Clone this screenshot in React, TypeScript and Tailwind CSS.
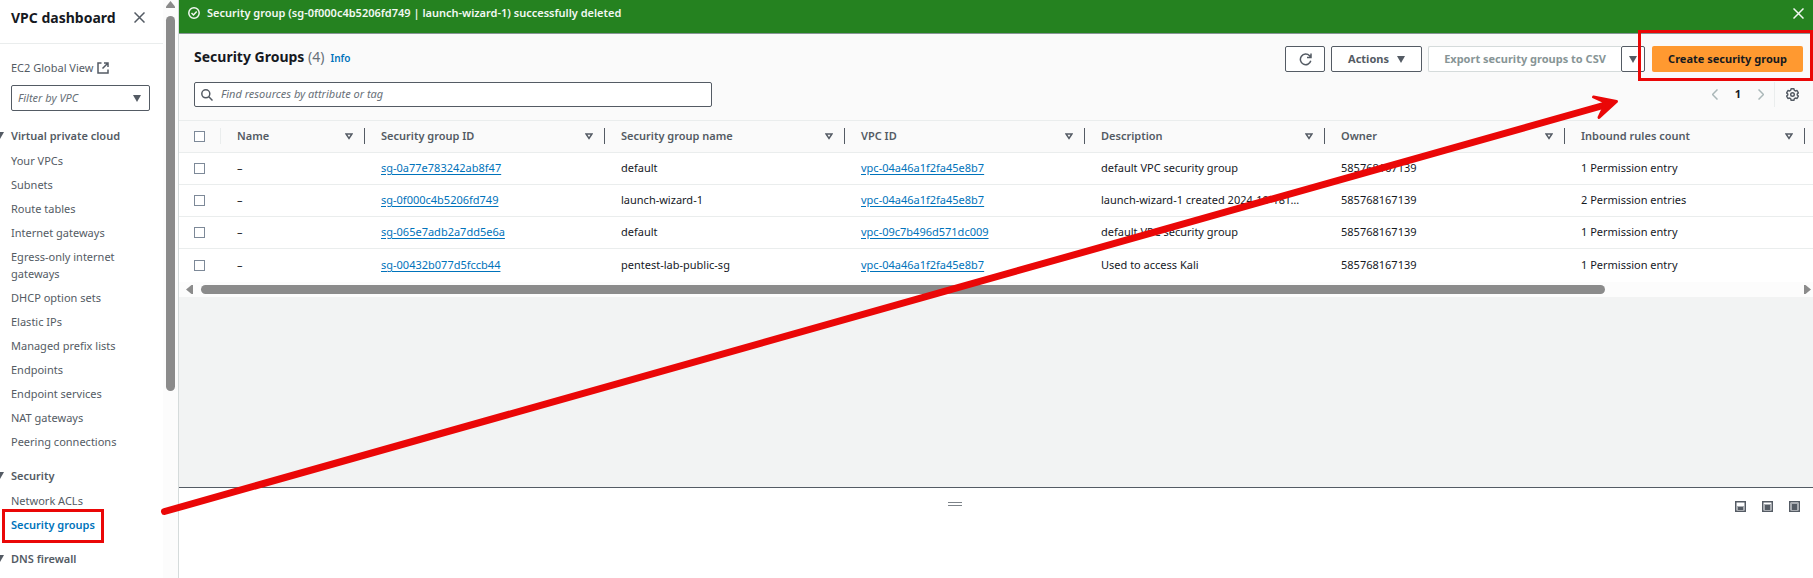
import React from 'react';

const links = [
  'Your VPCs',
  'Subnets',
  'Route tables',
  'Internet gateways',
  'Egress-only internet gateways',
  'DHCP option sets',
  'Elastic IPs',
  'Managed prefix lists',
  'Endpoints',
  'Endpoint services',
  'NAT gateways',
  'Peering connections',
];

const columns = [
  'Name',
  'Security group ID',
  'Security group name',
  'VPC ID',
  'Description',
  'Owner',
  'Inbound rules count',
];

const rows = [
  { id: 'sg-0a77e783242ab8f47', name: 'default', vpc: 'vpc-04a46a1f2fa45e8b7', description: 'default VPC security group', rules: '1 Permission entry' },
  { id: 'sg-0f000c4b5206fd749', name: 'launch-wizard-1', vpc: 'vpc-04a46a1f2fa45e8b7', description: 'launch-wizard-1 created 2024-10-18T…', rules: '2 Permission entries' },
  { id: 'sg-065e7adb2a7dd5e6a', name: 'default', vpc: 'vpc-09c7b496d571dc009', description: 'default VPC security group', rules: '1 Permission entry' },
  { id: 'sg-00432b077d5fccb44', name: 'pentest-lab-public-sg', vpc: 'vpc-04a46a1f2fa45e8b7', description: 'Used to access Kali', rules: '1 Permission entry' },
];

function Caret() {
  return (
    <svg width="8" height="7" viewBox="0 0 8 7" fill="currentColor" className="shrink-0">
      <path d="M0 0h8L4 7z" />
    </svg>
  );
}

function Cross() {
  return (
    <svg width="11" height="11" viewBox="0 0 11 11" fill="none" stroke="currentColor" strokeWidth="1.5">
      <path d="M.5.5l10 10M10.5.5l-10 10" />
    </svg>
  );
}

function Chevron({ flip = false }: { flip?: boolean }) {
  return (
    <svg width="6" height="11" viewBox="0 0 6 11" fill="none" stroke="currentColor" strokeWidth="1.5">
      <path d={flip ? 'M.5.5l5 5-5 5' : 'M5.5.5l-5 5 5 5'} />
    </svg>
  );
}

function PanelIcon({ top }: { top: number }) {
  return (
    <svg width="11" height="11" viewBox="0 0 11 11">
      <rect x=".75" y=".75" width="9.5" height="9.5" fill="#fff" stroke="#545b64" strokeWidth="1.5" />
      <rect x="2" y={top - 1} width="7" height={10 - top} fill="#a9adb2" />
      <rect x="3" y={top} width="5" height={9 - top} fill="#545b64" />
    </svg>
  );
}

function Tick({ label }: { label: string }) {
  return (
    <input
      type="checkbox"
      aria-label={label}
      className="block size-[11px] appearance-none border border-[#7d8998] bg-white"
    />
  );
}

function SectionTitle({ children }: { children: React.ReactNode }) {
  return (
    <h2>
      <button className="flex items-center gap-[7px] font-semibold leading-[17px]">
        <svg width="8" height="7" viewBox="0 0 8 7" fill="currentColor" className="-ml-1">
          <path d="M0 0h8L4 7z" />
        </svg>
        {children}
      </button>
    </h2>
  );
}

function Sidebar() {
  return (
    <aside className="flex w-[178px] shrink-0 bg-white text-[#545b64]">
      <div className="min-w-0 flex-1">
        <div className="flex h-11 items-center justify-between border-b border-[#eaeded] pb-2 pl-[11px] pr-[18px]">
          <h1 className="text-[14px] font-bold text-[#16191f]">VPC dashboard</h1>
          <button aria-label="Close navigation"><Cross /></button>
        </div>
        <div className="pl-[11px] pr-[13px] pt-[15px]">
          <a href="#" className="flex items-center gap-1 leading-[17px]">
            EC2 Global View
            <svg width="12" height="12" viewBox="0 0 12 12" fill="none" stroke="currentColor" strokeWidth="1.5">
              <path d="M4.5 1H1v10h10V7.5M7 1h4v4M11 1L5.5 6.5" />
            </svg>
          </a>
          <div className="relative mt-[9px] flex items-center">
            <select
              aria-label="Filter by VPC"
              className="h-[26px] w-full appearance-none rounded-[2px] border border-[#545b64] bg-white pl-[6px] italic text-[#687078]"
            >
              <option>Filter by VPC</option>
            </select>
            <span className="pointer-events-none absolute right-[9px]"><Caret /></span>
          </div>
        </div>
        <nav className="pt-4">
          <SectionTitle>Virtual private cloud</SectionTitle>
          <ul className="flex flex-col gap-[7px] pb-[17px] pl-[11px] pr-8 pt-2">
            {links.map((link) => (
              <li key={link} className="leading-[17px]"><a href="#">{link}</a></li>
            ))}
          </ul>
          <SectionTitle>Security</SectionTitle>
          <ul className="flex flex-col gap-[7px] pb-[17px] pl-[11px] pt-2">
            <li className="leading-[17px]"><a href="#">Network ACLs</a></li>
            <li className="leading-[17px]">
              <span className="relative inline-block">
                <a href="#" className="font-semibold text-[#0073bb]">Security groups</a>
                <span className="pointer-events-none absolute -bottom-[10px] -left-[9px] -right-[9px] -top-[7px] border-[3px] border-[#ea0707]" />
              </span>
            </li>
          </ul>
          <SectionTitle>DNS firewall</SectionTitle>
        </nav>
      </div>
      <div className="flex w-[15px] flex-col items-center bg-[#fcfcfc] pt-px text-[#8b8b8b]">
        <svg width="9" height="7" viewBox="0 0 9 7" fill="currentColor"><path d="M4.5 0L9 5.500V7H0V5.500z" /></svg>
        <div className="mt-2 h-[65%] w-[9px] rounded-full bg-[#8b8b8b]" />
      </div>
    </aside>
  );
}

function Toolbar() {
  const button = 'flex h-[26px] items-center justify-center rounded-[2px] border border-[#545b64] bg-white font-bold';
  return (
    <header className="border-b border-[#eaeded] bg-[#fafafa] pb-[13px] pl-[15px] pr-[10px] pt-3">
      <div className="flex items-start justify-between">
        <div className="flex items-baseline">
          <h2 className="text-[14px] font-bold leading-[22px] text-[#16191f]">
            Security Groups <span className="font-normal text-[#687078]">(4)</span>
          </h2>
          <a href="#" className="ml-[6px] text-[10px] font-semibold text-[#0073bb]">Info</a>
        </div>
        <div className="flex">
          <button aria-label="Refresh" className={button + ' w-10'}>
            <svg width="13" height="13" viewBox="0 0 13 13" fill="none" stroke="currentColor" strokeWidth="1.5">
              <path d="M11.800 7.800A5.300 5.300 0 1 1 10.600 2.800L12 4.300M12 .5v4H8" />
            </svg>
          </button>
          <button className={button + ' ml-[6px] w-[91px] gap-2'}>Actions <Caret /></button>
          <button disabled className="ml-[6px] h-[26px] w-[193px] rounded-l-[2px] border border-r-0 border-[#d5dbdb] bg-white font-bold text-[#879596]">
            Export security groups to CSV
          </button>
          <button aria-label="Export options" className={button + ' w-6'}><Caret /></button>
          <div className="relative ml-[7px]">
            <button className="h-[26px] w-[151px] rounded-[2px] bg-[#ff9930] font-bold text-[#16191f]">Create security group</button>
            <span className="pointer-events-none absolute -bottom-[9px] -left-[14px] -right-[10px] -top-4 border-[3px] border-[#ea0707]" />
          </div>
        </div>
      </div>
      <div className="mt-[10px] flex items-start justify-between">
        <label className="flex h-[25px] w-[518px] items-center gap-2 rounded-[2px] border border-[#545b64] bg-white pl-[6px]">
          <svg width="12" height="12" viewBox="0 0 12 12" fill="none" stroke="currentColor" strokeWidth="1.5">
            <circle cx="4.8" cy="4.8" r="4" /><path d="M7.800 7.800l3.700 3.700" />
          </svg>
          <input
            aria-label="Find resources"
            placeholder="Find resources by attribute or tag"
            className="min-w-0 flex-1 bg-transparent text-[11px] italic outline-none placeholder:text-[#687078]"
          />
        </label>
        <div className="flex h-[25px] items-center pr-1 text-[#aab7b8]">
          <button aria-label="Previous page"><Chevron /></button>
          <button className="w-10 font-bold text-[#16191f]">1</button>
          <button aria-label="Next page"><Chevron flip /></button>
          <button aria-label="Preferences" className="ml-[10px] flex h-full items-center border-l border-[#eaeded] pl-[11px] text-[#545b64]">
            <svg width="13" height="13" viewBox="0 0 16 16" fill="none" stroke="currentColor" strokeWidth="1.8" strokeLinejoin="round">
              <path d="M6.300 1h3.400l.6 1.900 1.300.7 2-.5 1.600 2.900-1.400 1.400v1.200l1.400 1.400-1.600 2.900-2-.5-1.300.7-.6 1.900H6.300l-.6-1.900-1.300-.7-2 .5L.8 10l1.400-1.400V7.400L.8 6l1.600-2.900 2 .5 1.300-.7z" />
              <circle cx="8" cy="8" r="2.200" />
            </svg>
          </button>
        </div>
      </div>
    </header>
  );
}

function GroupsTable() {
  return (
    <table className="w-full table-fixed border-collapse bg-white text-left text-[#16191f]">
      <colgroup>
        <col className="w-[42px]" />
        <col className="w-[144px]" />
        {columns.slice(1).map((c) => <col key={c} className="w-[240px]" />)}
        <col />
      </colgroup>
      <thead>
        <tr className="h-[31px] border-b border-[#eaeded] bg-[#fafafa] text-[#545b64]">
          <th className="p-0">
            <div className="flex h-4 items-center border-r border-[#eaeded] pl-[15px]"><Tick label="Select all" /></div>
          </th>
          {columns.map((c) => (
            <th key={c} className="p-0">
              <div className="flex h-4 items-center justify-between border-r border-[#545b64] pl-4 pr-[11px] font-semibold">
                {c}
                <svg width="8" height="7" viewBox="0 0 8 7" fill="none" stroke="currentColor" strokeWidth="1.5">
                  <path d="M1 1h6L4 5.500z" />
                </svg>
              </div>
            </th>
          ))}
          <th />
        </tr>
      </thead>
      <tbody>
        {rows.map((r) => (
          <tr key={r.id} className="h-8 border-b border-[#eaeded] last:h-[34px] last:border-b-0">
            <td className="p-0 pl-[15px]"><Tick label={r.id} /></td>
            <td className="p-0 pl-4">–</td>
            <td className="p-0 pl-4"><a href="#" className="text-[#0073bb] underline underline-offset-2">{r.id}</a></td>
            <td className="p-0 pl-4">{r.name}</td>
            <td className="p-0 pl-4"><a href="#" className="text-[#0073bb] underline underline-offset-2">{r.vpc}</a></td>
            <td className="truncate p-0 pl-4">{r.description}</td>
            <td className="p-0 pl-4">585768167139</td>
            <td className="p-0 pl-4">{r.rules}</td>
            <td />
          </tr>
        ))}
      </tbody>
    </table>
  );
}

export default function App() {
  return (
    <div className="relative flex h-screen overflow-hidden bg-white font-['Noto_Sans','Open_Sans',sans-serif] text-[11px] text-[#545b64]">
      <Sidebar />
      <main className="flex min-w-0 flex-1 flex-col border-l border-[#d5dbdb]">
        <div className="flex h-[34px] items-start justify-between border-b border-[#879596] bg-[#258220] pl-[9px] pr-[9px] pt-1 text-[#f2f8f2]">
          <p className="flex items-center gap-[7px] font-semibold leading-[17px]">
            <svg width="12" height="12" viewBox="0 0 12 12" fill="none" stroke="currentColor" strokeWidth="1.5">
              <circle cx="6" cy="6" r="5.2" /><path d="M3.500 6l2 2 3.200-3.500" />
            </svg>
            Security group (sg-0f000c4b5206fd749 | launch-wizard-1) successfully deleted
          </p>
          <button aria-label="Dismiss" className="pt-1"><Cross /></button>
        </div>
        <Toolbar />
        <GroupsTable />
        <div className="flex h-[15px] items-center bg-[#fcfcfc] pl-[7px] pr-[2px] text-[#8b8b8b]">
          <svg width="7" height="9" viewBox="0 0 7 9" fill="currentColor"><path d="M0 4.500L5.500 0H7v9H5.500z" /></svg>
          <div className="flex-1 px-2"><div className="h-[9px] w-[88%] rounded-full bg-[#8b8b8b]" /></div>
          <svg width="7" height="9" viewBox="0 0 7 9" fill="currentColor"><path d="M7 4.500L1.500 0H0v9h1.500z" /></svg>
        </div>
        <div className="flex-1 bg-[#f2f3f3]" />
        <section className="flex h-[91px] items-start border-t border-[#545b64] bg-white pt-[13px]">
          <div className="flex flex-1 justify-center pt-px">
            <button aria-label="Resize panel" className="h-1 w-[14px] border-y border-[#7d8389]" />
          </div>
          <div className="flex gap-4 pl-1 pr-[13px]">
            <button aria-label="Small panel"><PanelIcon top={6} /></button>
            <button aria-label="Medium panel"><PanelIcon top={4} /></button>
            <button aria-label="Full panel"><PanelIcon top={3} /></button>
          </div>
        </section>
      </main>
      <svg className="pointer-events-none absolute left-0 top-0" width="1813" height="578" viewBox="0 0 1813 578" fill="none" stroke="#ea0707" strokeLinecap="round" strokeLinejoin="round">
        <path d="M164.500 511.500L1605 105" strokeWidth="7" />
        <path d="M1593.500 97l23 4.500L1599 117.500l5-10.500-.5-5.500z" strokeWidth="3" fill="#ea0707" />
      </svg>
    </div>
  );
}
